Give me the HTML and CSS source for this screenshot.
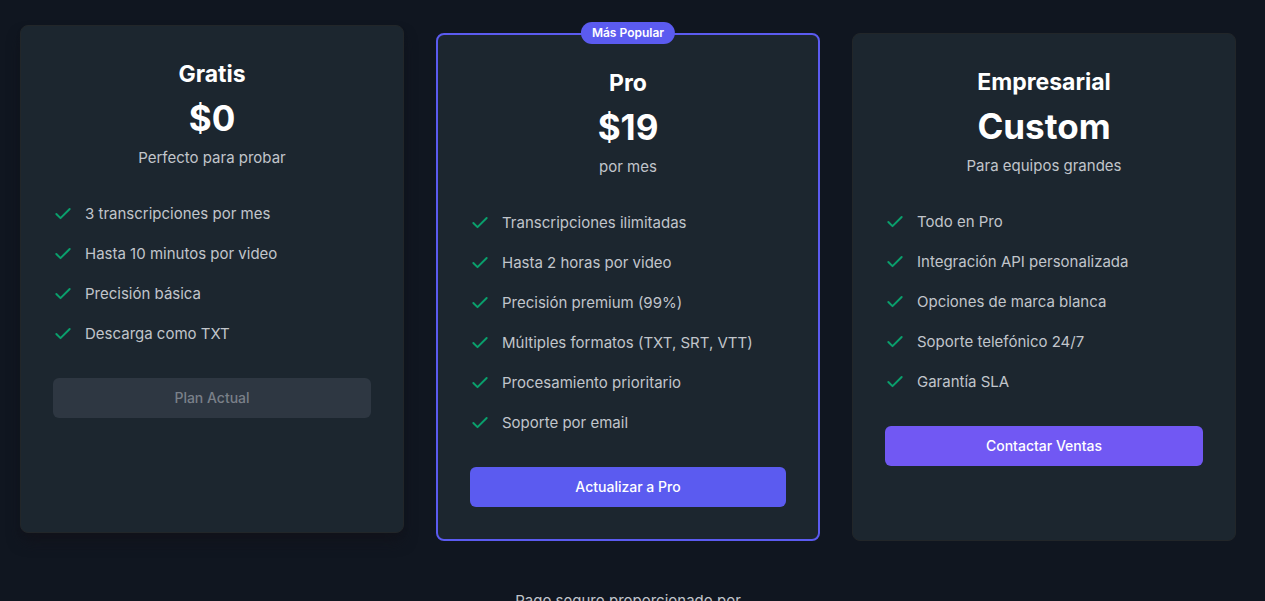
FILE: index.html
```html
<!DOCTYPE html>
<html lang="es">
<head>
<meta charset="utf-8">
<title>Planes</title>
<link rel="stylesheet" href="styles.css">
</head>
<body>
<svg class="sprite" aria-hidden="true">
  <symbol id="check" viewBox="0 0 24 24"><path d="M20 6 9 17l-5-5"/></symbol>
</svg>
<main class="pricing">
  <div class="plans">
    <section class="card card-raised">
      <header class="head">
        <h2 class="name">Gratis</h2>
        <p class="price">$0</p>
        <p class="note">Perfecto para probar</p>
      </header>
      <ul class="features">
        <li><svg class="tick"><use href="#check"/></svg>3 transcripciones por mes</li>
        <li><svg class="tick"><use href="#check"/></svg>Hasta 10 minutos por video</li>
        <li><svg class="tick"><use href="#check"/></svg>Precisión básica</li>
        <li><svg class="tick"><use href="#check"/></svg>Descarga como TXT</li>
      </ul>
      <button class="btn btn-current" type="button" disabled>Plan Actual</button>
    </section>
    <section class="card card-pro">
      <span class="badge">Más Popular</span>
      <header class="head">
        <h2 class="name">Pro</h2>
        <p class="price">$19</p>
        <p class="note">por mes</p>
      </header>
      <ul class="features">
        <li><svg class="tick"><use href="#check"/></svg>Transcripciones ilimitadas</li>
        <li><svg class="tick"><use href="#check"/></svg>Hasta 2 horas por video</li>
        <li><svg class="tick"><use href="#check"/></svg>Precisión premium (99%)</li>
        <li><svg class="tick"><use href="#check"/></svg>Múltiples formatos (TXT, SRT, VTT)</li>
        <li><svg class="tick"><use href="#check"/></svg>Procesamiento prioritario</li>
        <li><svg class="tick"><use href="#check"/></svg>Soporte por email</li>
      </ul>
      <button class="btn btn-pro" type="button">Actualizar a Pro</button>
    </section>
    <section class="card">
      <header class="head">
        <h2 class="name">Empresarial</h2>
        <p class="price">Custom</p>
        <p class="note">Para equipos grandes</p>
      </header>
      <ul class="features">
        <li><svg class="tick"><use href="#check"/></svg>Todo en Pro</li>
        <li><svg class="tick"><use href="#check"/></svg>Integración API personalizada</li>
        <li><svg class="tick"><use href="#check"/></svg>Opciones de marca blanca</li>
        <li><svg class="tick"><use href="#check"/></svg>Soporte telefónico 24/7</li>
        <li><svg class="tick"><use href="#check"/></svg>Garantía SLA</li>
      </ul>
      <button class="btn btn-sales" type="button">Contactar Ventas</button>
    </section>
  </div>
  <p class="secure">Pago seguro proporcionado por</p>
</main>
</body>
</html>
```
FILE: styles.css
```css
* { box-sizing: border-box; }
html { background: #101620; }
body {
  margin: 0;
  color: #c1c5cb;
  font: 400 15px/24px Inter, "Liberation Sans", sans-serif;
}
html { scrollbar-width: none; }
h2, p, ul { margin: 0; padding: 0; }
.sprite { display: none; }
.pricing { padding: 33px 29px 48px 20px; }
.plans {
  display: grid;
  grid-template-columns: repeat(3, minmax(0, 1fr));
  gap: 32px;
}
.card {
  position: relative;
  padding: 32px;
  border: 1px solid #222629;
  border-radius: 8px;
  background: #1c262f;
}
.card-raised {
  transform: translateY(-8px);
  box-shadow: 0 10px 15px -3px #12131b, 0 4px 6px -4px #12131b;
}
.card-pro { border: 2px solid #5b5bf0; }
.badge {
  position: absolute;
  top: -13px;
  left: 50%;
  transform: translateX(-50%);
  padding: 3px 11px;
  border-radius: 11px;
  background: #5b5bf0;
  color: #fff;
  font-size: 12px;
  font-weight: 600;
  line-height: 16px;
  white-space: nowrap;
}
.head {
  display: flex;
  flex-direction: column;
  gap: 8px;
  margin-bottom: 32px;
  text-align: center;
}
.name {
  color: #fff;
  font-size: 23px;
  font-weight: 700;
  line-height: 32px;
}
.price {
  color: #fff;
  font-size: 35px;
  font-weight: 700;
  line-height: 40px;
}
.features {
  display: flex;
  flex-direction: column;
  gap: 16px;
  margin-bottom: 32px;
  list-style: none;
}
.features li {
  display: flex;
  align-items: center;
  gap: 12px;
}
.tick {
  flex: none;
  width: 20px;
  height: 20px;
  fill: none;
  stroke: #0a9f6c;
  stroke-width: 2.4;
  stroke-linecap: round;
  stroke-linejoin: round;
}
.btn {
  display: block;
  width: 100%;
  height: 40px;
  border: 0;
  border-radius: 6px;
  color: #fff;
  font: 500 14px/20px Inter, "Liberation Sans", sans-serif;
}
.btn-current { background: #2e3742; color: #7a8089; }
.btn-pro { background: #5b5bf0; }
.btn-sales { background: #7158f3; }
.secure { margin-top: 48px; text-align: center; }
```
